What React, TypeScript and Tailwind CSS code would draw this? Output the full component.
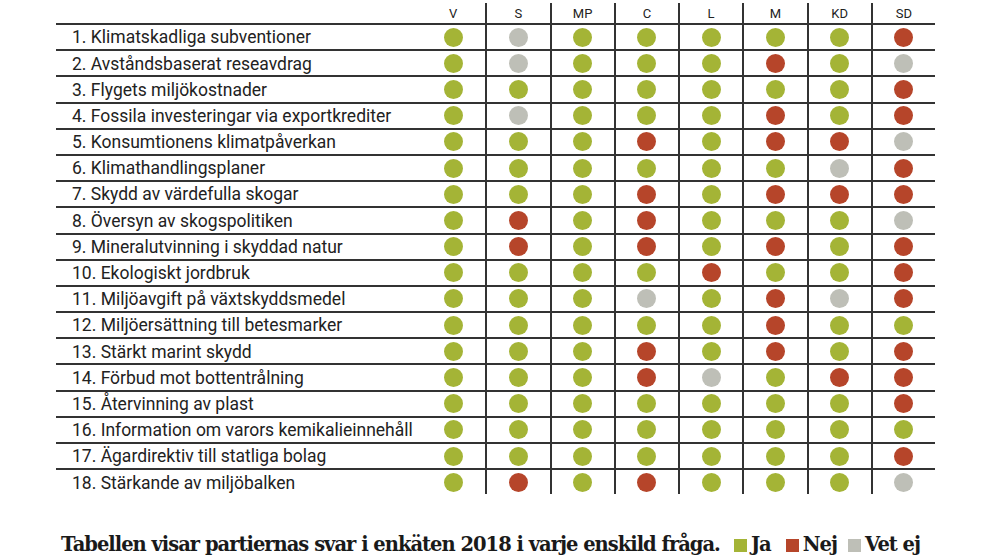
const parties = ['V', 'S', 'MP', 'C', 'L', 'M', 'KD', 'SD'];

// g = Ja, r = Nej, x = Vet ej
const rows: [string, string][] = [
  ['1. Klimatskadliga subventioner', 'gxgggggr'],
  ['2. Avståndsbaserat reseavdrag', 'gxgggrgx'],
  ['3. Flygets miljökostnader', 'gggggggr'],
  ['4. Fossila investeringar via exportkrediter', 'gxgggrgr'],
  ['5. Konsumtionens klimatpåverkan', 'gggrgrrx'],
  ['6. Klimathandlingsplaner', 'ggggggxr'],
  ['7. Skydd av värdefulla skogar', 'gggrgrrr'],
  ['8. Översyn av skogspolitiken', 'grgrgggx'],
  ['9. Mineralutvinning i skyddad natur', 'grgrgrgr'],
  ['10. Ekologiskt jordbruk', 'ggggrggr'],
  ['11. Miljöavgift på växtskyddsmedel', 'gggxgrxr'],
  ['12. Miljöersättning till betesmarker', 'gggggrgg'],
  ['13. Stärkt marint skydd', 'gggrgrgr'],
  ['14. Förbud mot bottentrålning', 'gggrxgrr'],
  ['15. Återvinning av plast', 'gggggggr'],
  ['16. Information om varors kemikalieinnehåll', 'gggggggg'],
  ['17. Ägardirektiv till statliga bolag', 'gggggggr'],
  ['18. Stärkande av miljöbalken', 'grgrgggx'],
];

function Dot({ v }: { v: string }) {
  const cls =
    v === 'g' ? 'bg-[#a4b436]' : v === 'r' ? 'bg-[#b6452a]' : 'bg-[#bebfb7]';
  return <span className={`block w-[19px] h-[19px] rounded-full ${cls}`} />;
}

export default function App() {
  return (
    <div
      className="w-[992px] h-[558px] bg-white overflow-hidden text-[#222]"
      style={{ fontFamily: 'Roboto, "Liberation Sans", sans-serif' }}
    >
      <div className="ml-[56px] w-[879px] pt-[3px]">
        {/* header */}
        <div className="flex h-[20px]">
          <div className="w-[365px]" />
          {parties.map((p, i) => (
            <div
              key={p}
              className={`w-[64.25px] flex items-center justify-center text-[13px] leading-none ${
                i > 0 ? 'border-l-2 border-[#333]' : ''
              }`}
            >
              {p}
            </div>
          ))}
        </div>

        {rows.map(([label, vals]) => (
          <div key={label} className="flex h-[26.2px] border-t-2 border-[#333]">
            <div className="w-[365px] pl-[16px] pt-[2px] flex items-center text-[17.5px] leading-none whitespace-nowrap">
              {label}
            </div>
            {vals.split('').map((v, i) => (
              <div
                key={i}
                className={`w-[64.25px] flex items-center justify-center ${
                  i > 0 ? 'border-l-2 border-[#333]' : ''
                }`}
              >
                <Dot v={v} />
              </div>
            ))}
          </div>
        ))}
      </div>

      {/* footer */}
      <div
        className="mt-[39px] ml-[61px] flex items-center text-[19.5px] leading-[24px] font-bold tracking-[-1px] text-[#1a1a1a] whitespace-nowrap"
        style={{ fontFamily: '"DejaVu Serif", "Liberation Serif", serif' }}
      >
        <span>Tabellen visar partiernas svar i enkäten 2018 i varje enskild fråga.</span>
        <span className="shrink-0 ml-[14px] w-[13px] h-[13px] bg-[#a4b436]" />
        <span className="ml-[4px]">Ja</span>
        <span className="shrink-0 ml-[15px] w-[13px] h-[13px] bg-[#b6452a]" />
        <span className="ml-[4px]">Nej</span>
        <span className="shrink-0 ml-[11px] w-[13px] h-[13px] bg-[#bebfb7]" />
        <span className="ml-[4px]">Vet ej</span>
      </div>
    </div>
  );
}
